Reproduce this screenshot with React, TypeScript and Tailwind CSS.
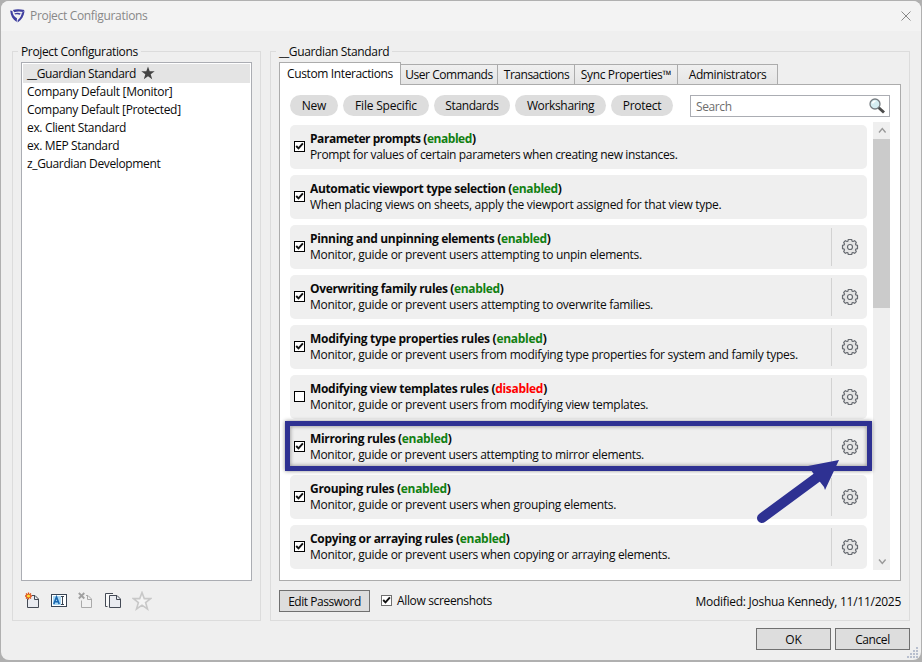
import type { ReactNode } from "react";

const configurations = [
  { name: "__Guardian Standard", starred: true, tracking: "tracking-[-0.42px]" },
  { name: "Company Default [Monitor]", tracking: "tracking-[-0.3px]" },
  { name: "Company Default [Protected]", tracking: "tracking-[-0.33px]" },
  { name: "ex. Client Standard", tracking: "tracking-[-0.34px]" },
  { name: "ex. MEP Standard", tracking: "tracking-[-0.38px]" },
  { name: "z_Guardian Development", tracking: "tracking-[-0.36px]" },
];

const tabs = [
  { label: "User Commands", style: "w-[98px] tracking-[-0.45px]" },
  { label: "Transactions", style: "w-[78px] pl-px tracking-[-0.5px]" },
  { label: "Sync Properties™", style: "w-[104px] tracking-[-0.35px]" },
  { label: "Administrators", style: "w-[101px] tracking-[-0.4px]" },
];

const filters = [
  { label: "New", style: "w-12 tracking-[-0.2px]" },
  { label: "File Specific", style: "w-[86px] tracking-[-0.2px]" },
  { label: "Standards", style: "w-[76px] tracking-[-0.4px]" },
  { label: "Worksharing", style: "w-[91px] tracking-[-0.35px]" },
  { label: "Protect", style: "w-[62px] tracking-[-0.25px]" },
];

const rules = [
  {
    title: "Parameter prompts",
    tracking: "tracking-[-0.45px]",
    description: "Prompt for values of certain parameters when creating new instances.",
    descriptionTracking: "tracking-[-0.36px]",
    enabled: true,
  },
  {
    title: "Automatic viewport type selection",
    tracking: "tracking-[-0.34px]",
    description: "When placing views on sheets, apply the viewport assigned for that view type.",
    descriptionTracking: "tracking-[-0.275px]",
    enabled: true,
  },
  {
    title: "Pinning and unpinning elements",
    tracking: "tracking-[-0.33px]",
    description: "Monitor, guide or prevent users attempting to unpin elements.",
    enabled: true,
    settings: true,
  },
  {
    title: "Overwriting family rules",
    tracking: "tracking-[-0.35px]",
    description: "Monitor, guide or prevent users attempting to overwrite families.",
    enabled: true,
    settings: true,
  },
  {
    title: "Modifying type properties rules",
    tracking: "tracking-[-0.28px]",
    description: "Monitor, guide or prevent users from modifying type properties for system and family types.",
    enabled: true,
    settings: true,
  },
  {
    title: "Modifying view templates rules",
    tracking: "tracking-[-0.31px]",
    description: "Monitor, guide or prevent users from modifying view templates.",
    enabled: false,
    settings: true,
  },
  {
    title: "Mirroring rules",
    tracking: "tracking-[-0.33px]",
    description: "Monitor, guide or prevent users attempting to mirror elements.",
    descriptionTracking: "tracking-[-0.32px]",
    enabled: true,
    settings: true,
    highlighted: true,
  },
  {
    title: "Grouping rules",
    tracking: "tracking-[-0.31px]",
    description: "Monitor, guide or prevent users when grouping elements.",
    enabled: true,
    settings: true,
  },
  {
    title: "Copying or arraying rules",
    tracking: "tracking-[-0.3px]",
    description: "Monitor, guide or prevent users when copying or arraying elements.",
    enabled: true,
    settings: true,
  },
];

function Logo() {
  return (
    <svg viewBox="0 0 16 16" className="h-4 w-4" fill="#3f3fa0">
      <path d="M1.200 2.500 3.400 3C3.700 6.500 5.200 8.800 8 10.300L7.700 14C3.600 11.400 1.500 7.500 1.200 2.500z" />
      <path d="M3.800 2C7 .9 11 1 15.500 2L14.300 4.100C11 3.100 8 3.200 5.300 4.300z" />
      <path d="M15.600 3C15 8 12.700 11.900 8.600 14.600L8.700 12.200C11.200 10.200 12.500 7.500 12.900 4.800z" />
      <path d="M5.300 5.500C7.500 4.600 9.600 4.700 11.700 5.400L10.900 6.800C9.300 6.200 7.900 6.100 6.400 6.600z" />
    </svg>
  );
}

function Gear() {
  return (
    <svg viewBox="0 0 18 18" className="h-[18px] w-[18px]" fill="#e4e4e4" stroke="#666a70" strokeWidth="1.2" strokeLinejoin="round">
      <path d="M7.300 1.500h3.400l.4 1.700.9.300 1.600-.8 1.700 1.700-.8 1.600.3.900 1.700.4v3.400l-1.700.4-.3.900.8 1.600-1.700 1.700-1.600-.8-.9.300-.4 1.700H7.300l-.4-1.700-.9-.3-1.600.8-1.700-1.700.8-1.600-.3-.9-1.700-.4V7.300l1.700-.4.300-.9-.8-1.600 1.700-1.700 1.600.8.900-.3z" />
      <circle cx="9" cy="9" r="2.500" fill="#f4f4f4" />
    </svg>
  );
}

function Checkbox({ checked, border = "border-black" }: { checked: boolean; border?: string }) {
  return (
    <span className={`flex h-[11px] w-[11px] shrink-0 border bg-white ${border}`}>
      {checked && (
        <svg viewBox="0 0 9 9" className="h-[9px] w-[9px]" fill="none" stroke="#111" strokeWidth="1.9">
          <path d="M1.200 4 3.500 6.400 7.900 1.400" />
        </svg>
      )}
    </span>
  );
}

function GroupBox({ title, className, children }: { title: string; className: string; children: ReactNode }) {
  return (
    <fieldset className={`relative border border-[#dcdcdc] ${className}`}>
      <span className="absolute -top-2 left-[5px] bg-[#efefef] px-[3px] leading-4 tracking-[-0.35px]">{title}</span>
      {children}
    </fieldset>
  );
}

function ListToolbar() {
  return (
    <div className="mt-2.5 ml-1 flex h-5 items-center">
      <svg viewBox="0 0 16 18" className="h-[18px] w-4" fill="none">
        <path d="M2.500 6.500v9h11V7L10 3.500H7" fill="#e9ebf0" stroke="#444a55" />
        <path d="M9.500 3.500v4h4" stroke="#444a55" />
        <path d="M3.500.5v7M0 4h7M1 1.500l5 5M6 1.500l-5 5" stroke="#dc4a10" strokeWidth="1.300" />
        <circle cx="3.500" cy="4" r="1.600" fill="#ffdf38" />
      </svg>
      <svg viewBox="0 0 16 14" className="ml-[10px] h-3.5 w-4" fill="none">
        <rect x=".5" y=".5" width="15" height="12" fill="#fff" stroke="#384454" />
        <path d="M2 2h8v9H2z" fill="#a9d8f4" />
        <path d="m2.800 10 2.700-7 2.700 7M3.800 7.800h3.400" stroke="#1a66ae" strokeWidth="1.600" />
        <path d="M10 2.500h3M11.500 3v7M10 10.500h3" stroke="#384454" />
      </svg>
      <svg viewBox="0 0 16 18" className="ml-[11px] h-[18px] w-4" fill="none">
        <path d="M3.500 8.500v7h10V7L10 3.500H8" fill="#f1f1f1" stroke="#aaa" />
        <path d="M9.500 3.500v4h4" stroke="#aaa" />
        <path d="m.8 1 5.500 5.500M6.300 1 .8 6.500" stroke="#a0a0a0" strokeWidth="1.800" />
      </svg>
      <svg viewBox="0 0 17 18" className="ml-[10px] h-[18px] w-[17px]" fill="none" stroke="#444a55">
        <path d="M3.500 14.500h-2v-13H9" fill="#fafafa" />
        <path d="M5.500 3.500H13L16.500 7v8.500h-11z" fill="#e9ebf0" />
        <path d="M12.500 3.500v4h4" />
      </svg>
      <svg viewBox="0 0 20 20" className="ml-[11px] h-5 w-5" fill="#f4f4f4" stroke="#c8c8c8" strokeWidth="1.600">
        <path d="m10 1.600 2.300 6h6.300l-5 3.900 1.900 6.500L10 14.200 4.500 18l1.900-6.500-5-3.900h6.300z" />
      </svg>
    </div>
  );
}

function RuleRow({ rule }: { rule: (typeof rules)[number] }) {
  return (
    <div className="relative flex h-11 shrink-0 items-center rounded-[5px] bg-[#efefef] pl-1">
      <div className="pb-0.5">
        <Checkbox checked={rule.enabled} />
      </div>
      <div className="ml-[5px] flex-1 whitespace-nowrap">
        <div className={`h-4 leading-4 font-bold ${rule.tracking}`}>
          {rule.title} (
          <span className={rule.enabled ? "text-[#128012]" : "text-[#f00]"}>{rule.enabled ? "enabled" : "disabled"}</span>)
        </div>
        <div className={`h-4 leading-4 ${rule.descriptionTracking ?? "tracking-[-0.3px]"}`}>{rule.description}</div>
      </div>
      {rule.settings && (
        <div className="flex h-[38px] w-9 items-center justify-center border-l border-[#d2d2d2]">
          <Gear />
        </div>
      )}
      {rule.highlighted && (
        <>
          <div className="absolute -top-1 -right-[5px] -left-[5px] z-10 h-[50px] border-[5px] border-[#2e3192] shadow-[0_0_4px_rgba(0,0,0,.45),inset_0_0_4px_rgba(0,0,0,.45)]" />
          <svg viewBox="0 0 90 70" className="absolute top-[33px] left-[463px] z-20 h-[70px] w-[90px]" fill="#2e3192">
            <path d="M9 60 66 18" stroke="#2e3192" strokeWidth="10" strokeLinecap="round" />
            <path d="M86 2 55 8l5 7 11 14 1 3z" />
          </svg>
        </>
      )}
    </div>
  );
}

function ScrollBar() {
  return (
    <div className="flex h-[448px] w-[17px] flex-col bg-[#efefef]">
      <svg viewBox="0 0 17 17" className="h-[17px] w-[17px]" fill="none" stroke="#9a9a9a" strokeWidth="1.400">
        <path d="m6 10.500 3.300-4 3.300 4" />
      </svg>
      <div className="h-[169px] bg-[#cbcbcb]" />
      <svg viewBox="0 0 17 17" className="mt-auto h-[17px] w-[17px]" fill="none" stroke="#9a9a9a" strokeWidth="1.400">
        <path d="m6 6.500 3.300 4 3.300-4" />
      </svg>
    </div>
  );
}

function Button({ label, className }: { label: string; className: string }) {
  return (
    <button className={`flex h-[22px] items-center justify-center border border-[#707070] bg-[#ddd] pt-0.5 ${className}`}>
      {label}
    </button>
  );
}

export default function App() {
  return (
    <div className="h-[662px] w-[922px] overflow-hidden bg-[#b0b0b0] p-px pb-0.5 font-['Open_Sans','Noto_Sans',sans-serif] text-[12px] text-[#0a0a0a]">
      <div className="relative flex h-[659px] flex-col overflow-hidden rounded-lg bg-[#efefef]">
        <header className="flex h-[30px] shrink-0 items-center bg-[#f3f3f3] pl-2 text-[#888]">
          <Logo />
          <h1 className="ml-[5px] tracking-[-0.32px]">Project Configurations</h1>
          <svg viewBox="0 0 10 10" className="mr-[10px] ml-auto h-2.5 w-2.5" fill="none" stroke="#888">
            <path d="m.5.5 9 9M9.500.5l-9 9" />
          </svg>
        </header>

        <main className="mt-5 ml-[11px] flex h-[570px] gap-[9px]">
          <GroupBox title="Project Configurations" className="w-[249px] px-2 pt-2.5">
            <div className="h-[519px] w-[231px] border border-[#abadb3] bg-white p-px">
              {configurations.map((item) => (
                <div
                  key={item.name}
                  className={`flex items-center pl-1 ${item.tracking} ${item.starred ? "h-[19px] bg-[#e4e4e4] pt-px" : "h-[18px]"}`}
                >
                  {item.name}
                  {item.starred && (
                    <svg viewBox="0 0 14 14" className="mb-0.5 ml-[5px] h-3.5 w-3.5" fill="#444">
                      <path d="m7 .500 1.700 4.700h5l-4 3 1.500 5L7 10.200l-4.200 3 1.500-5-4-3h5z" />
                    </svg>
                  )}
                </div>
              ))}
            </div>
            <ListToolbar />
          </GroupBox>

          <GroupBox title="__Guardian Standard" className="w-[640px] px-2 pt-2.5">
            <nav className="relative z-10 flex h-[23px] items-end">
              <div className="flex h-[23px] w-[122px] items-center justify-center border border-b-0 border-[#acacac] bg-white tracking-[-0.38px]">
                Custom Interactions
              </div>
              {tabs.map((tab) => (
                <div
                  key={tab.label}
                  className={`-ml-px flex h-[21px] items-center justify-center border border-[#acacac] bg-linear-to-b from-[#f0f0f0] to-[#e5e5e5] pt-px ${tab.style}`}
                >
                  {tab.label}
                </div>
              ))}
            </nav>

            <section className="-mt-px h-[497px] w-[622px] border border-[#acacac] bg-white pl-2.5">
              <div className="flex h-[37px] pt-2.5">
                <div className="flex gap-[5px]">
                  {filters.map((filter) => (
                    <button
                      key={filter.label}
                      className={`flex h-[21px] items-center justify-center rounded-full bg-[#ddd] pt-px ${filter.style}`}
                    >
                      {filter.label}
                    </button>
                  ))}
                </div>
                <div className="ml-[17px] flex h-[22px] w-[200px] items-center border border-[#abadb3] pl-[5px] text-[#6d6d6d]">
                  <span className="pt-0.5 tracking-[-0.4px]">Search</span>
                  <svg viewBox="0 0 16 16" className="mr-1 mb-px ml-auto h-4 w-4" fill="none">
                    <path d="m9.500 9.500 5.500 5" stroke="#4b4b4b" strokeWidth="3" />
                    <circle cx="6" cy="6" r="5" fill="#d5edf2" stroke="#777e83" strokeWidth="1.300" />
                    <path d="M3.500 5.500a3 3 0 0 1 3-2.300" stroke="#fff" strokeWidth="1.500" />
                  </svg>
                </div>
              </div>

              <div className="flex">
                <div className="mt-[3px] mr-1.5 flex w-[577px] flex-col gap-1.5">
                  {rules.map((rule) => (
                    <RuleRow key={rule.title} rule={rule} />
                  ))}
                </div>
                <ScrollBar />
              </div>
            </section>

            <div className="mt-[9px] flex h-[22px] w-[622px] items-center">
              <Button label="Edit Password" className="w-[91px] tracking-[-0.45px]" />
              <label className="ml-[11px] flex items-center gap-[5px] tracking-[-0.35px]">
                <span className="pb-px">
                  <Checkbox checked border="border-[#707070]" />
                </span>
                Allow screenshots
              </label>
              <span className="ml-auto pt-0.5 tracking-[-0.27px]">Modified: Joshua Kennedy, 11/11/2025</span>
            </div>
          </GroupBox>
        </main>

        <footer className="mt-[7px] mr-[11px] flex justify-end gap-1">
          <Button label="OK" className="w-[75px] tracking-[-0.2px]" />
          <Button label="Cancel" className="w-[75px] tracking-[-0.4px]" />
        </footer>

        {/* Resize grip */}
        <svg viewBox="0 0 12 12" className="absolute right-0.5 bottom-px h-3 w-3" fill="#b8bfce">
          <path d="M9 0h2v2H9zM6 3h2v2H6zM9 3h2v2H9zM3 6h2v2H3zM6 6h2v2H6zM9 6h2v2H9zM0 9h2v2H0zM3 9h2v2H3zM6 9h2v2H6zM9 9h2v2H9z" />
        </svg>
      </div>
    </div>
  );
}
